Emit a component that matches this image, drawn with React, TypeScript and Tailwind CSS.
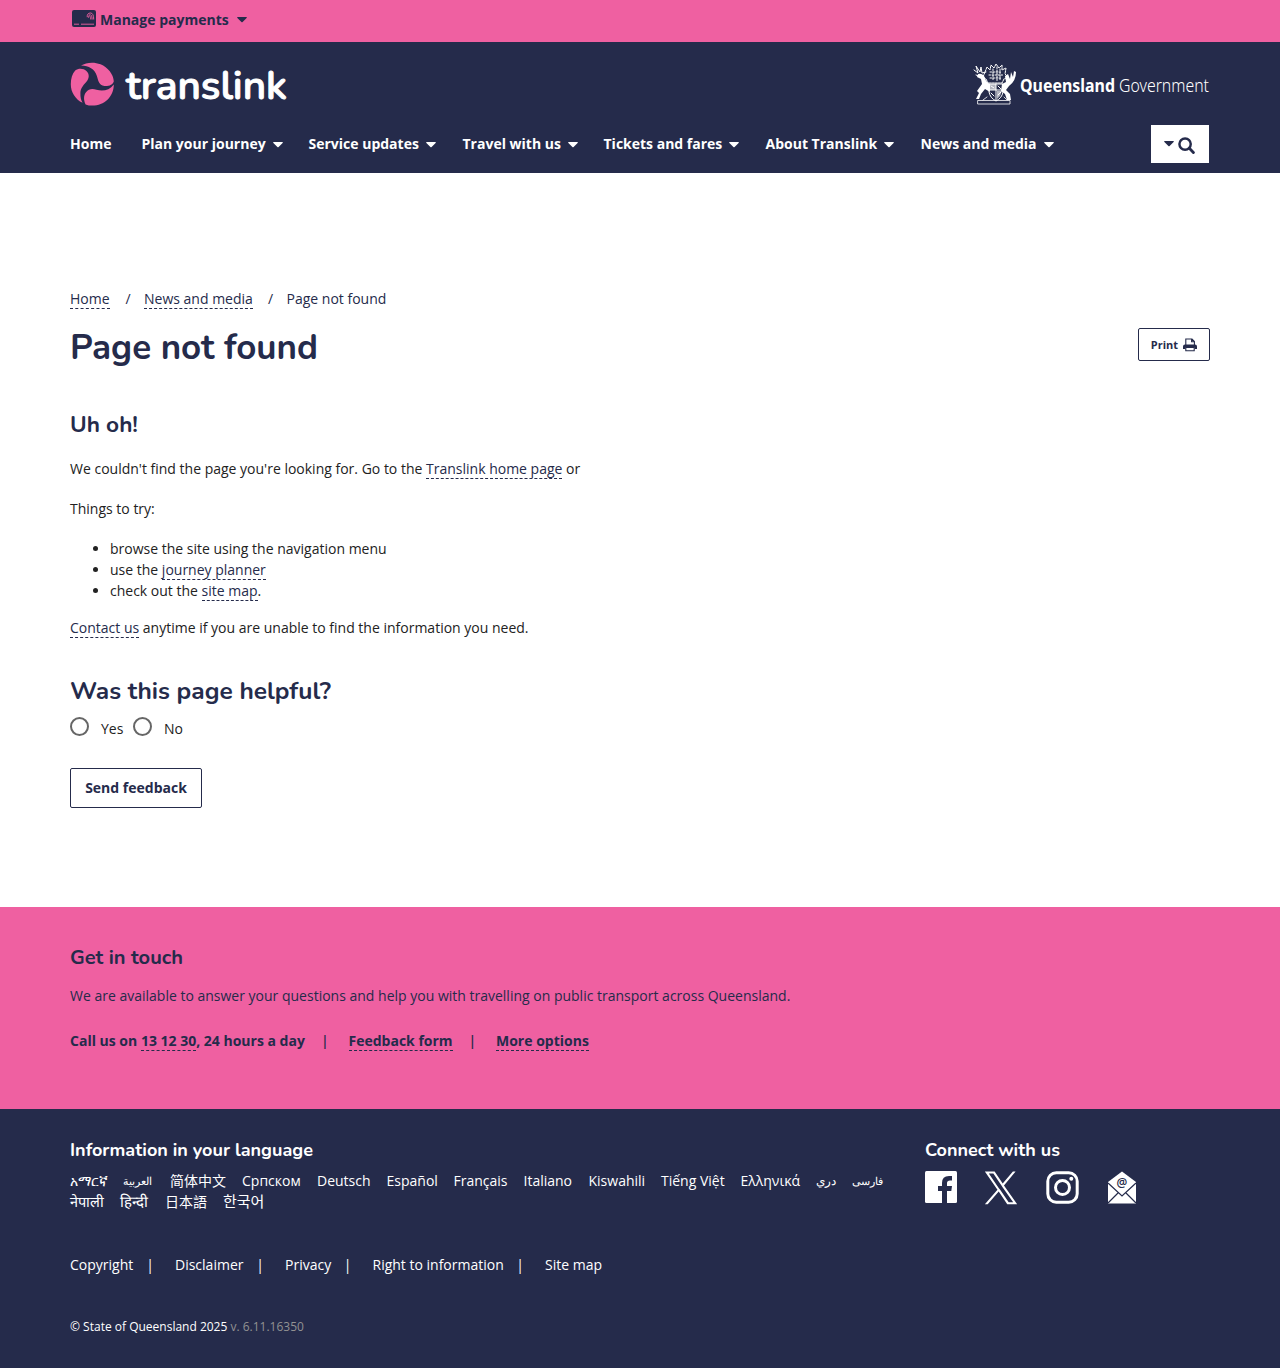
import type { ReactNode } from "react";

function Caret({ className = "" }: { className?: string }) {
  return (
    <svg viewBox="0 0 10 6" className={`h-[6px] w-[10px] fill-current ${className}`}>
      <path d="M0.6 0H9.4Q10.2 .3 9.6 1L5.6 5Q5 5.6 4.4 5L.4 1Q-.2 .3 .6 0Z" />
    </svg>
  );
}

function Link({ children }: { children: ReactNode }) {
  return (
    <a className="inline-block h-[19px] border-b border-dashed border-[#252b4b] leading-[18px] text-[#252b4b]">
      {children}
    </a>
  );
}

function Heading({ text, width, size, height, baseline, color = "fill-[#252b4b] font-bold" }: {
  text: string; width: number; size: number; height: number; baseline: number; color?: string;
}) {
  return (
    <svg width={width + 4} height={height} className={`block overflow-visible ${color}`}>
      <text x="0" y={baseline} fontSize={size} textLength={width} lengthAdjust="spacingAndGlyphs" className="font-['Nunito','Lato',sans-serif]">
        {text}
      </text>
    </svg>
  );
}

function CardIcon() {
  return (
    <svg viewBox="0 0 24 17" className="h-[17px] w-6">
      <rect width="24" height="17" rx="2" fill="#252b4b" />
      <path d="M2 14.2H7M9 14.2H22" stroke="#ef60a1" strokeWidth=".9" />
      <g fill="none" stroke="#ef60a1" strokeWidth=".9">
        <path d="M15.2 7.2Q15 3 18.5 3Q21.7 3 21.7 9.5" />
        <path d="M16.6 7.8Q16.5 4.6 18.3 4.6Q20.2 5 20.2 9.5" />
        <path d="M18 6.2Q18.8 7 18.8 9.5" />
      </g>
    </svg>
  );
}

function TranslinkLogo() {
  return (
    <svg viewBox="0 0 224 44" className="h-11 w-[224px] overflow-visible">
      <g fill="#ef60a1">
        <path d="M11 3.6C16 .4 24 -.4 30.5 2.3C38 5.4 43.4 12.5 43.8 19.2C43.2 22.6 39 24.3 34.5 24C28.5 23.4 28.3 18.2 26.7 13.6C24.8 7.3 18.5 3.5 11 3.6Z" />
        <path d="M5.2 8.5C8.5 6 13.5 6.3 16.4 9C19.8 12.2 19.3 16.5 16.2 20C12.5 24.2 10.5 26.5 10.4 31.2C10.3 35 11 38 12.6 40.8C5.5 37.3 .8 30.5 .8 22.2C.8 16.5 2.2 12 5.2 8.5Z" />
        <path d="M43.8 22.4C43.8 34.5 34.2 43.6 22.4 43.6Q18.6 43.6 15.6 42.4C13.7 38.5 13.3 33.5 16 30.2C18.8 26.8 22.3 26.5 26.5 27.8C33 29.8 39.5 28.2 43.8 22.4Z" />
      </g>
      <text x="56" y="37" textLength="161" lengthAdjust="spacingAndGlyphs" fontSize="40" fill="white" stroke="white" strokeWidth="1" strokeLinejoin="round" className="font-['Nunito','Lato',sans-serif] font-semibold">translink</text>
    </svg>
  );
}

function GovernmentLogo() {
  return (
    <svg viewBox="0 0 237 44" className="h-11 w-[237px] overflow-visible">
      <g fill="none" stroke="white" strokeWidth="1" strokeLinecap="round" strokeLinejoin="round">
        <path d="M12 10L14 5L17 8L18 3L21 6L23 2L26 6L29 3L29 8L33 6L32 12L35 15L31 17L29 21H15L13 17L10 15Z" strokeDasharray="2 1" />
        <path d="M17 10H28M16 13H30M17 16H29M20 7V19M24 5V19M27 7V19" strokeDasharray="1.5 1.5" />
        <path d="M16 22H30V30Q29 36 23 39Q17 36 16 30ZM16 28H30M23 22V38M18 24L21 26M25 24L28 27M18 31L21 34M25 33L28 30" />
        <path d="M1 8L5 11L3 4L7 10L8 5L9 11L13 10M3 13L8 15" />
        <path d="M5 38.5H37V42H5ZM10 38L14 35M31 35L34 38" strokeWidth=".8" />
      </g>
      <g fill="white">
        <path d="M5 12Q10 11 12 16Q13 20 17 22L17 30L12 27L8 32L6 37H3L6 31L4 29L9 22L8 17L4 15Z" />
        <path d="M43 10Q43 19 36 24L33 28L37 32L38 38H34L32 32L28 29L29 22L33 20L32 14L35 12L37 17L38 10L40 15L41 9Z" />
        <path d="M17 22H23V28H17ZM24 29H29L27 34L24 37Z" opacity=".65" />
      </g>
      <text x="47" y="30" textLength="95" lengthAdjust="spacingAndGlyphs" fontSize="18" fill="white" className="font-['Noto_Sans',sans-serif] font-bold">Queensland</text>
      <text x="146" y="30" textLength="90" lengthAdjust="spacingAndGlyphs" fontSize="17.5" fill="white" className="font-['Noto_Sans',sans-serif] font-light">Government</text>
    </svg>
  );
}

const nav = [
  { label: "Home", width: "w-[71.5px]" },
  { label: "Plan your journey", width: "w-[167px]" },
  { label: "Service updates", width: "w-[154px]" },
  { label: "Travel with us", width: "w-[141px]" },
  { label: "Tickets and fares", width: "w-[162px]" },
  { label: "About Translink", width: "w-[155px]" },
  { label: "News and media", width: "w-[140px]" },
];

const languages = [
  [
    { t: "አማርኛ", w: "w-[53px]" }, { t: "العربية", w: "w-[47px] text-[11px]" }, { t: "简体中文", w: "w-[72px]" },
    { t: "Српском", w: "w-[75px]" }, { t: "Deutsch", w: "w-[69.5px]" }, { t: "Español", w: "w-[67px]" },
    { t: "Français", w: "w-[70px]" }, { t: "Italiano", w: "w-[65px]" }, { t: "Kiswahili", w: "w-[72.5px]" },
    { t: "Tiếng Việt", w: "w-[79.5px]" }, { t: "Ελληνικά", w: "w-[75px]" }, { t: "دري", w: "w-[36.5px] text-[12px]" }, { t: "فارسی", w: "w-[40px] pt-px text-[10.5px]" },
  ],
  [
    { t: "नेपाली", w: "w-[50px] text-[14.5px]" }, { t: "हिन्दी", w: "w-[45px] text-[15px]" }, { t: "日本語", w: "w-[58px]" }, { t: "한국어", w: "w-[50px] text-[15px]" },
  ],
];

const legal = [
  { t: "Copyright", w: "w-[105px]" }, { t: "Disclaimer", w: "w-[110px]" }, { t: "Privacy", w: "w-[87.5px]" },
  { t: "Right to information", w: "w-[172.5px]" }, { t: "Site map", w: "w-[60px]" },
];

export default function App() {
  return (
    <div className="flex h-[1368px] w-[1280px] flex-col overflow-hidden bg-white font-['Open_Sans','Noto_Sans_CJK_SC',sans-serif] text-[14px] leading-[21px] text-[#222]">
      <div className="flex h-[42px] items-start bg-[#ef60a1] px-[70px] font-bold text-[#252b4b]">
        <div className="mt-[10px] ml-[2px] w-[28px]"><CardIcon /></div>
        <span className="mt-[9px] w-[136.5px] whitespace-nowrap">Manage payments</span>
        <Caret className="mt-[17px]" />
      </div>

      <header className="h-[131px] bg-[#252b4b] px-[70px] text-white">
        <div className="flex h-[83px] items-start justify-between pt-[20px]">
          <TranslinkLogo />
          <GovernmentLogo />
        </div>
        <div className="flex items-start justify-between">
          <nav className="flex pt-[8px] font-bold">
            {nav.map((n, i) => (
              <a key={n.label} className={`flex items-center gap-2 whitespace-nowrap ${n.width}`}>
                {n.label}
                {i > 0 && <Caret className="-ml-px mt-[2px]" />}
              </a>
            ))}
          </nav>
          <button className="mr-px flex h-[38px] w-[58px] items-center justify-center gap-1 bg-white pr-px text-[#252b4b]">
            <Caret />
            <svg viewBox="0 0 18 18" className="mt-[3px] h-[17px] w-[17px]" fill="none" stroke="currentColor" strokeLinecap="round">
              <circle cx="7.5" cy="7.5" r="6" strokeWidth="2.6" />
              <path d="M12 12L16.3 16.3" strokeWidth="3" />
            </svg>
          </button>
        </div>
      </header>

      <main className="h-[734px] px-[70px] pt-[115px]">
        <div className="flex h-[22px] text-[#252b4b]">
          <div className="w-[55.5px]"><Link>Home</Link></div><span className="w-[18.5px]">/</span>
          <div className="w-[124px]"><Link>News and media</Link></div><span className="w-[18.5px]">/</span>
          <span>Page not found</span>
        </div>
        <div className="flex items-start justify-between pt-[18px]">
          <h1><Heading text="Page not found" width={248} size={36} height={52} baseline={31} /></h1>
          <button className="flex h-[33px] w-[72px] items-center justify-center gap-[5px] rounded-[2px] border border-[#252b4b] text-[11px] font-bold text-[#252b4b]">
            Print
            <svg viewBox="0 0 14 14" className="h-[14px] w-[14px]">
              <path d="M2.8 7V1H9L11.4 3.4V7M8.6 1V3.7H11.4" fill="none" stroke="#252b4b" strokeWidth="1.1" />
              <path d="M0 8.5Q0 6.5 2 6.5H12Q14 6.5 14 8.5V11H11.5V9.6H2.5V11H0Z" fill="#252b4b" />
              <path d="M2.8 9.5H11.2V12.8H2.8Z" fill="white" stroke="#252b4b" strokeWidth="1.1" />
            </svg>
          </button>
        </div>
        <h2 className="mt-[31px] h-[47px]"><Heading text="Uh oh!" width={68} size={22.5} height={30} baseline={21} /></h2>
        <p className="h-10">We couldn't find the page you're looking for. Go to the <Link>Translink home page</Link> or</p>
        <p className="h-10">Things to try:</p>
        <ul className="h-[79px] list-disc pl-10">
          <li className="h-[21px]">browse the site using the navigation menu</li>
          <li className="h-[21px]">use the <Link>journey planner</Link></li>
          <li className="h-[21px]">check out the <Link>site map</Link>.</li>
        </ul>
        <p className="h-[60px]"><Link>Contact us</Link> anytime if you are unable to find the information you need.</p>
        <h2 className="h-[40px]"><Heading text="Was this page helpful?" width={261} size={24.5} height={34} baseline={22} /></h2>
        <div className="flex h-[51px] items-start">
          <span className="h-[19px] w-[19px] rounded-full border-2 border-[#666]" />
          <span className="ml-3 mt-px w-[32px]">Yes</span>
          <span className="h-[19px] w-[19px] rounded-full border-2 border-[#666]" />
          <span className="ml-3 mt-px">No</span>
        </div>
        <button className="h-[40px] w-[132px] rounded-[2px] border border-[#252b4b] pb-[2px] font-bold text-[#252b4b]">Send feedback</button>
      </main>

      <section className="h-[202px] bg-[#ef60a1] px-[70px] pt-[38px] text-[#252b4b]">
        <h2 className="h-[40px]"><Heading text="Get in touch" width={113} size={20} height={28} baseline={19} /></h2>
        <p className="h-[45px]">We are available to answer your questions and help you with travelling on public transport across Queensland.</p>
        <div className="flex font-bold">
          <span className="w-[251px]">Call us on <Link>13 12 30</Link>, 24 hours a day</span><span className="w-[27.5px] font-semibold">|</span>
          <span className="w-[120px]"><Link>Feedback form</Link></span><span className="w-[27.5px] font-semibold">|</span>
          <span><Link>More options</Link></span>
        </div>
      </section>

      <footer className="h-[259px] bg-[#252b4b] px-[70px] pt-[30px] text-white">
        <div className="flex h-[115px]">
          <div className="w-[855px]">
            <h3 className="h-[31px]"><Heading text="Information in your language" width={243} size={18} height={27} baseline={17} color="fill-white font-bold" /></h3>
            {languages.map((row, i) => (
              <div key={i} className="flex h-[21px]">
                {row.map((l) => <a key={l.t} className={`shrink-0 whitespace-nowrap ${l.w}`}>{l.t}</a>)}
              </div>
            ))}
          </div>
          <div>
            <h3 className="h-[32px]"><Heading text="Connect with us" width={135} size={18} height={27} baseline={17} color="fill-white font-bold" /></h3>
            <div className="flex text-white">
              <svg viewBox="0 0 32 32" className="mr-[28px] h-8 w-8"><rect width="32" height="32" rx="1.5" fill="white" /><path d="M17 32V20H13V15H17V12Q17 5 24 5H27V9.5H25Q22 9.5 22 12V15H27L26.3 20H22V32Z" fill="#252b4b" /></svg>
              <svg viewBox="0 0 24 24" className="-ml-[1px] mr-[28px] h-[34px] w-[34px] fill-white"><path d="M14.1 10.2L22.3 .3H20.4L13.2 8.9L7.5 .3H.6L9.5 13.2L.6 23.5H2.6L10.4 14.4L16.4 23.5H23.4ZM11.4 13.3L10.5 12.1L3.4 1.8H6.6L12.2 10.1L13.1 11.4L20.6 22H17.4Z" /></svg>
              <svg viewBox="0 0 33 33" className="mr-[28px] h-[33px] w-[33px]" fill="none" stroke="white" strokeWidth="3"><rect x="1.8" y="1.8" width="29.4" height="29.4" rx="8.5" /><circle cx="16.5" cy="16.5" r="7" /><circle cx="25.3" cy="7.8" r="2" fill="white" stroke="none" /></svg>
              <svg viewBox="0 0 30 33" className="h-[33px] w-[30px]"><path d="M1 11L15 .5L29 11V32.5H1Z" fill="white" /><path d="M1 12L15 25L29 12M1 32L11 22M29 32L19 22" fill="none" stroke="#252b4b" strokeWidth="1.2" /><text x="15" y="16" textAnchor="middle" fontSize="12" fill="#252b4b" className="font-['Open_Sans',sans-serif] font-semibold">@</text></svg>
            </div>
          </div>
        </div>
        <div className="flex h-[62px]">
          {legal.map((l, i) => (
            <div key={l.t} className={`flex justify-between whitespace-nowrap ${l.w}`}><span>{l.t}</span>{i < 4 && <span className="mr-[21px]">|</span>}</div>
          ))}
        </div>
        <p className="text-[12px]">© State of Queensland 2025 <span className="text-[#929292]">v. 6.11.16350</span></p>
      </footer>
    </div>
  );
}
